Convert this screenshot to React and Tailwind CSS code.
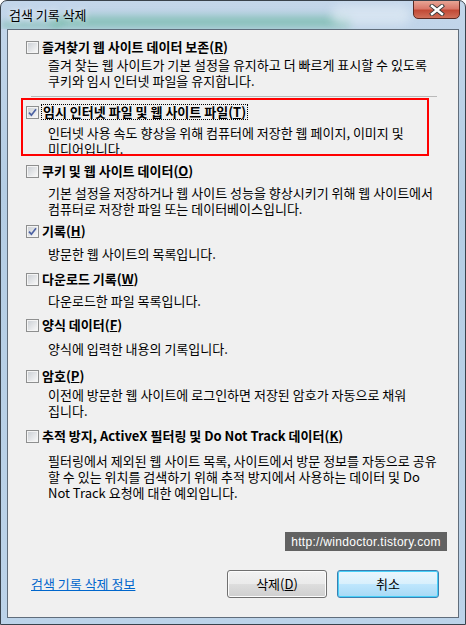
const items = [
  {
    label: '즐겨찾기 웹 사이트 데이터 보존',
    accel: 'R',
    lines: ['즐겨 찾는 웹 사이트가 기본 설정을 유지하고 더 빠르게 표시할 수 있도록', '쿠키와 임시 인터넷 파일을 유지합니다.'],
    top: 'mt-[9px]',
    gap: 'mt-[2px]',
  },
  {
    label: '임시 인터넷 파일 및 웹 사이트 파일',
    accel: 'T',
    checked: true,
    focus: true,
    lines: ['인터넷 사용 속도 향상을 위해 컴퓨터에 저장한 웹 페이지, 이미지 및', '미디어입니다.'],
    top: 'mt-[7px]',
    gap: 'mt-[5px]',
  },
  {
    label: '쿠키 및 웹 사이트 데이터',
    accel: 'O',
    lines: ['기본 설정을 저장하거나 웹 사이트 성능을 향상시키기 위해 웹 사이트에서', '컴퓨터로 저장한 파일 또는 데이터베이스입니다.'],
    top: 'mt-[6px]',
    gap: 'mt-[6px]',
  },
  {
    label: '기록',
    accel: 'H',
    checked: true,
    lines: ['방문한 웹 사이트의 목록입니다.'],
    top: 'mt-[6px]',
    gap: 'mt-[7px]',
  },
  {
    label: '다운로드 기록',
    accel: 'W',
    lines: ['다운로드한 파일 목록입니다.'],
    top: 'mt-[9px]',
    gap: 'mt-[6px]',
  },
  {
    label: '양식 데이터',
    accel: 'F',
    lines: ['양식에 입력한 내용의 기록입니다.'],
    top: 'mt-[8px]',
    gap: 'mt-[8px]',
  },
  {
    label: '암호',
    accel: 'P',
    lines: ['이전에 방문한 웹 사이트에 로그인하면 저장된 암호가 자동으로 채워', '집니다.'],
    top: 'mt-[11px]',
    gap: 'mt-[3px]',
  },
  {
    label: '추적 방지, ActiveX 필터링 및 Do Not Track 데이터',
    accel: 'K',
    lines: [
      '필터링에서 제외된 웹 사이트 목록, 사이트에서 방문 정보를 자동으로 공유',
      '할 수 있는 위치를 검색하기 위해 추적 방지에서 사용하는 데이터 및 Do',
      'Not Track 요청에 대한 예외입니다.',
    ],
    top: 'mt-[9px]',
    gap: 'mt-[9px]',
  },
];

function CheckBox({ checked }) {
  return (
    <span className="w-[13px] h-[13px] shrink-0 border border-[#8e8f8f] p-px bg-[#f4f4f4]">
      <span className="relative block w-full h-full bg-[linear-gradient(135deg,#cdd1d6,#f7f7f7)]">
        {checked && (
          <svg width="9" height="9" viewBox="0 0 9 9" className="absolute left-0 top-0">
            <path d="M1 4.6 L3.4 7.2 L8 1.2" stroke="#4d62a3" strokeWidth="1.7" fill="none" />
          </svg>
        )}
      </span>
    </span>
  );
}

function Item({ item }) {
  return (
    <div className={item.top}>
      <div className="flex items-center h-[16px] pl-[18px] gap-[3px]">
        <CheckBox checked={item.checked} />
        <span
          className={
            item.focus
              ? 'font-bold whitespace-nowrap leading-[14px] border border-dotted border-black px-px -ml-px'
              : 'font-bold whitespace-nowrap leading-[16px]'
          }
        >
          {item.label}(<span className="underline">{item.accel}</span>)
        </span>
      </div>
      <p className={`${item.gap} leading-[16px] pl-[40px] whitespace-pre`}>{item.lines.join('\n')}</p>
    </div>
  );
}

export default function App() {
  return (
    <div className="w-[466px] h-[625px] font-['Noto_Sans_CJK_KR','Noto_Sans',sans-serif] text-[13px] text-black">
      <div className="relative w-[466px] h-[625px] rounded-t-[7px] border border-[#39424c] overflow-hidden bg-[linear-gradient(180deg,#c3d6ea_0%,#b4cde4_30%,#bcd3e9_100%)]">
        {/* title bar */}
        <div className="relative h-[28px] flex items-center pl-[8px] overflow-hidden">
          <div className="absolute left-[50px] top-[15px] w-[300px] h-[12px] rounded-full bg-[#6fb8a4] opacity-70 blur-[4px]" />
          <div className="absolute left-[0px] top-[20px] w-[60px] h-[8px] rounded-full bg-[#6fb8a4] opacity-50 blur-[3px]" />
          <div className="absolute left-[330px] top-[4px] w-[80px] h-[20px] rounded-full bg-[#dfeaf4] opacity-70 blur-[5px]" />
          <span className="relative text-[13px] [text-shadow:0_0_6px_#ffffff]">검색 기록 삭제</span>
          <div className="absolute right-[5px] -top-px w-[47px] h-[19px] rounded-b-[5px] border border-[#5b2a22] bg-[linear-gradient(180deg,#e8a595_0%,#d9786a_45%,#c24a36_55%,#d0705a_100%)] flex items-center justify-center">
            <svg width="16" height="12" viewBox="0 0 16 12">
              <path d="M3 2 L13 10 M13 2 L3 10" stroke="#3b3b3b" strokeWidth="4.2" strokeLinecap="square" />
              <path d="M3 2 L13 10 M13 2 L3 10" stroke="#ffffff" strokeWidth="2.4" strokeLinecap="square" />
            </svg>
          </div>
        </div>

        {/* client area */}
        <div className="relative mx-[6px] h-[589px] border border-[#606d7b] bg-[#f0f0f0] flex flex-col">
          <Item item={items[0]} />
          <div className="mt-[7px] ml-[23px] mr-[21px] h-px bg-[#b9b9b9]" />
          {items.slice(1).map((it) => (
            <Item key={it.accel} item={it} />
          ))}

          <div className="mt-auto pb-[19px] pl-[23px] pr-[19px] flex items-center">
            <a href="#" className="text-[#0066cc] underline">
              검색 기록 삭제 정보
            </a>
            <div className="ml-auto flex gap-[10px]">
              <button className="w-[100px] h-[28px] rounded-[3px] border border-[#707070] bg-[linear-gradient(180deg,#f2f2f2_0%,#ebebeb_48%,#dddddd_52%,#cfcfcf_100%)] shadow-[inset_0_0_0_1px_#fcfcfc] text-[13px]">
                삭제(<span className="underline">D</span>)
              </button>
              <button className="w-[102px] h-[28px] rounded-[3px] border border-[#3c7fb1] bg-[linear-gradient(180deg,#eaf6fd_0%,#d9f0fc_48%,#bee6fd_52%,#a7d9f5_100%)] shadow-[inset_0_0_0_1px_#48d0f8] text-[13px]">
                취소
              </button>
            </div>
          </div>

          {/* red highlight annotation */}
          <div className="absolute left-[13px] top-[68px] w-[408px] h-[58px] border-2 border-[#ff0000]" />

          {/* watermark */}
          <div className="absolute left-[277px] top-[502px] w-[162px] h-[19px] bg-[#626262] text-white text-[12px] font-['Liberation_Sans',sans-serif] flex items-center justify-center tracking-[0.3px]">
            http://windoctor.tistory.com
          </div>
        </div>
      </div>
    </div>
  );
}
